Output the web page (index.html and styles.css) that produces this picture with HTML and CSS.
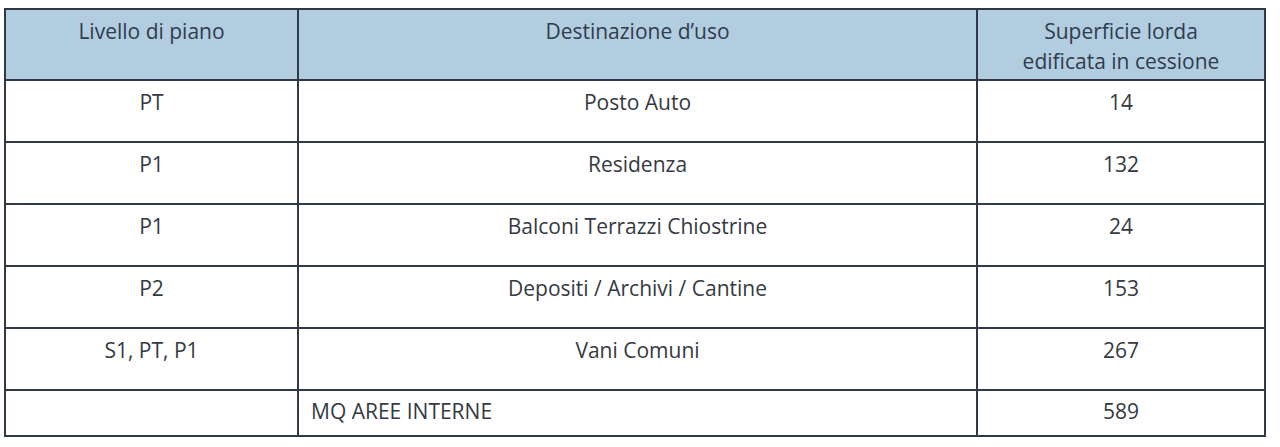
FILE: index.html
```html
<!DOCTYPE html>
<html lang="it">
<head>
<meta charset="utf-8">
<title>Superficie lorda edificata in cessione</title>
<link rel="stylesheet" href="styles.css">
</head>
<body>
<table class="areas">
  <colgroup>
    <col class="col-level">
    <col class="col-use">
    <col class="col-area">
  </colgroup>
  <thead>
    <tr class="head-row">
      <th>Livello di piano</th>
      <th>Destinazione d’uso</th>
      <th>Superficie lorda<br>edificata in cessione</th>
    </tr>
  </thead>
  <tbody>
    <tr class="row"><td>PT</td><td>Posto Auto</td><td>14</td></tr>
    <tr class="row"><td>P1</td><td>Residenza</td><td>132</td></tr>
    <tr class="row"><td>P1</td><td>Balconi Terrazzi Chiostrine</td><td>24</td></tr>
    <tr class="row"><td>P2</td><td>Depositi / Archivi / Cantine</td><td>153</td></tr>
    <tr class="row"><td>S1, PT, P1</td><td>Vani Comuni</td><td>267</td></tr>
    <tr class="row total"><td></td><td class="label">MQ AREE INTERNE</td><td>589</td></tr>
  </tbody>
</table>
</body>
</html>
```

FILE: styles.css
```css
html, body {
  margin: 0;
  padding: 0;
  background: #ffffff;
}

body {
  padding: 8px 0 0 4px;
  font-family: "Open Sans", "Noto Sans", "Liberation Sans", sans-serif;
  font-size: 21px;
  font-weight: 500;
  line-height: 30px;
  color: #353941;
}

.areas {
  table-layout: fixed;
  width: 1262px;
  border-collapse: separate;
  border-spacing: 0;
  border-top: 2px solid #2f3948;
  border-left: 2px solid #2f3948;
}

.col-level { width: 293px; }
.col-use { width: 679px; }
.col-area { width: 288px; }

.areas th,
.areas td {
  box-sizing: border-box;
  border-right: 2px solid #2f3948;
  border-bottom: 2px solid #2f3948;
  padding: 6px 8px 0;
  text-align: center;
  vertical-align: top;
  font-weight: 500;
}

.head-row th {
  height: 71px;
  background: #b2cde0;
  color: #303c4c;
}

.row td {
  height: 62px;
  background: #ffffff;
}

.row.total td {
  height: 46px;
  padding-top: 5px;
}

.row.total td.label {
  text-align: left;
  padding-left: 12px;
}
```
